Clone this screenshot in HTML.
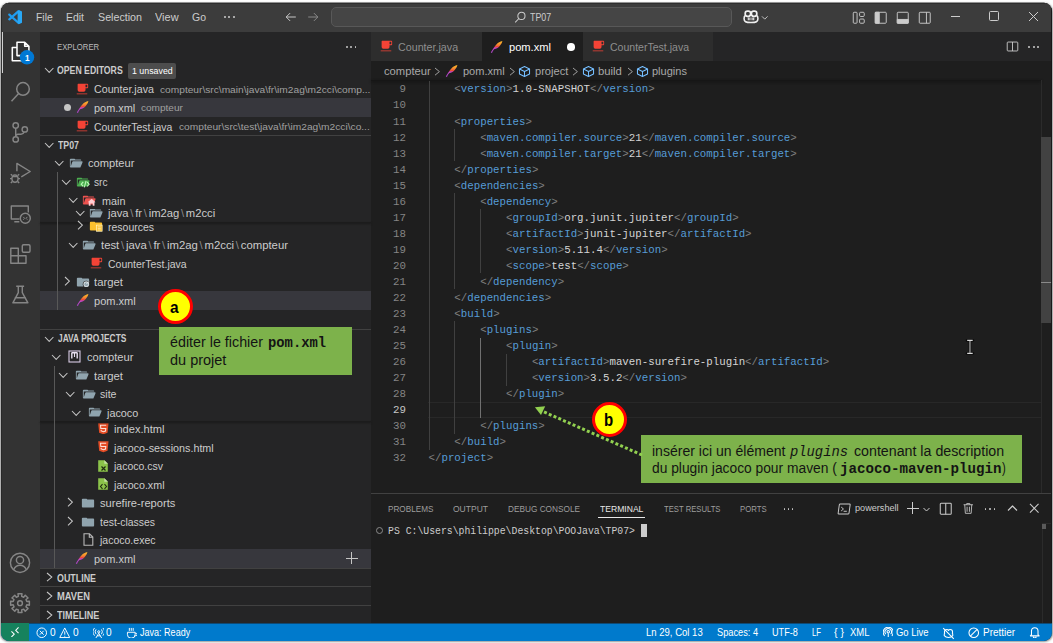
<!DOCTYPE html>
<html><head><meta charset="utf-8"><style>
html,body{margin:0;padding:0;}
body{width:1053px;height:643px;overflow:hidden;background:#ffffff;position:relative;}
#sh{position:absolute;left:1.2px;top:2.9px;width:1050.6px;height:637.0px;border-radius:8px;box-shadow:0 0.8px 2px 0.5px rgba(0,0,0,0.42);}
#w{position:absolute;left:0;top:0;width:1053px;height:643px;clip-path:inset(2.8px 1.1px 2.1px 1.1px round 8px);overflow:hidden;}
#w div,#w svg{position:absolute;}
.t{height:20px;line-height:20px;white-space:pre;}
</style></head><body><div id="sh"></div><div id="w">
<div style="left:0.00px;top:0.00px;width:1053.00px;height:643.00px;background:#1e1e1e;"></div>
<div style="left:0.00px;top:0.00px;width:1053.00px;height:32.00px;background:#3c3c3c;"></div>
<div style="left:0.00px;top:32.00px;width:40.00px;height:591.00px;background:#333333;"></div>
<div style="left:40.00px;top:32.00px;width:331.00px;height:591.00px;background:#252526;"></div>
<div style="left:371.00px;top:32.00px;width:682.00px;height:29.00px;background:#252526;"></div>
<div style="left:0.00px;top:623.00px;width:1053.00px;height:20.00px;background:#007acc;"></div>
<div style="left:0.00px;top:623.00px;width:1053.00px;height:1.00px;background:#0f4a75;"></div>
<div style="left:0.00px;top:623.00px;width:29.00px;height:20.00px;background:#16825d;"></div>
<div class="t" style="left:36.00px;top:7.39px;font-size:10.98px;color:#cccccc;font-weight:400;font-family:'Liberation Sans',sans-serif;transform:scaleX(0.9442);transform-origin:0 0;">File</div>
<div class="t" style="left:66.00px;top:7.39px;font-size:10.98px;color:#cccccc;font-weight:400;font-family:'Liberation Sans',sans-serif;transform:scaleX(0.9521);transform-origin:0 0;">Edit</div>
<div class="t" style="left:98.00px;top:7.39px;font-size:10.98px;color:#cccccc;font-weight:400;font-family:'Liberation Sans',sans-serif;transform:scaleX(0.9751);transform-origin:0 0;">Selection</div>
<div class="t" style="left:155.00px;top:7.39px;font-size:10.98px;color:#cccccc;font-weight:400;font-family:'Liberation Sans',sans-serif;transform:scaleX(1.0009);transform-origin:0 0;">View</div>
<div class="t" style="left:192.00px;top:7.39px;font-size:10.98px;color:#cccccc;font-weight:400;font-family:'Liberation Sans',sans-serif;transform:scaleX(0.9562);transform-origin:0 0;">Go</div>
<div style="left:331.20px;top:7.20px;width:401.30px;height:19.80px;background:#454545;border:1px solid #585858;box-sizing:border-box;border-radius:5px;"></div>
<div class="t" style="left:530.30px;top:7.39px;font-size:10.98px;color:#cccccc;font-weight:400;font-family:'Liberation Sans',sans-serif;transform:scaleX(0.8086);transform-origin:0 0;">TP07</div>
<div class="t" style="left:57.40px;top:36.50px;font-size:9.80px;color:#bbbbbb;font-weight:400;font-family:'Liberation Sans',sans-serif;transform:scaleX(0.7909);transform-origin:0 0;">EXPLORER</div>
<div class="t" style="left:57.00px;top:60.83px;font-size:10.00px;color:#cccccc;font-weight:700;font-family:'Liberation Sans',sans-serif;transform:scaleX(0.8715);transform-origin:0 0;">OPEN EDITORS</div>
<div style="left:128.00px;top:62.70px;width:48.00px;height:16.10px;background:#4d4d4d;border-radius:2px;"></div>
<div class="t" style="left:131.80px;top:61.08px;font-size:9.29px;color:#ffffff;font-weight:400;font-family:'Liberation Sans',sans-serif;transform:scaleX(0.9500);transform-origin:0 0;">1 unsaved</div>
<div style="left:40.00px;top:98.17px;width:331.00px;height:18.57px;background:#37373d;"></div>
<div class="t" style="left:94.40px;top:79.48px;font-size:10.98px;color:#cccccc;font-weight:400;font-family:'Liberation Sans',sans-serif;transform:scaleX(0.9725);transform-origin:0 0;">Counter.java</div>
<div class="t" style="left:159.50px;top:79.85px;font-size:9.90px;color:#a0a0a0;font-weight:400;font-family:'Liberation Sans',sans-serif;transform:scaleX(1.0306);transform-origin:0 0;">compteur\src\main\java\fr\im2ag\m2cci\comp...</div>
<div class="t" style="left:94.40px;top:98.05px;font-size:10.98px;color:#cccccc;font-weight:400;font-family:'Liberation Sans',sans-serif;transform:scaleX(0.9939);transform-origin:0 0;">pom.xml</div>
<div class="t" style="left:141.40px;top:98.42px;font-size:9.90px;color:#a0a0a0;font-weight:400;font-family:'Liberation Sans',sans-serif;transform:scaleX(1.0177);transform-origin:0 0;">compteur</div>
<div class="t" style="left:94.40px;top:116.62px;font-size:10.98px;color:#cccccc;font-weight:400;font-family:'Liberation Sans',sans-serif;transform:scaleX(0.9525);transform-origin:0 0;">CounterTest.java</div>
<div class="t" style="left:178.50px;top:116.99px;font-size:9.90px;color:#a0a0a0;font-weight:400;font-family:'Liberation Sans',sans-serif;transform:scaleX(1.0316);transform-origin:0 0;">compteur\src\test\java\fr\im2ag\m2cci\co...</div>
<div style="left:40.00px;top:134.60px;width:331.00px;height:1.00px;background:#414141;"></div>
<div style="left:40.00px;top:328.50px;width:331.00px;height:1.00px;background:#414141;"></div>
<div style="left:40.00px;top:568.00px;width:331.00px;height:1.00px;background:#414141;"></div>
<div style="left:40.00px;top:586.00px;width:331.00px;height:1.00px;background:#414141;"></div>
<div style="left:40.00px;top:605.00px;width:331.00px;height:1.00px;background:#414141;"></div>
<div class="t" style="left:58.00px;top:135.83px;font-size:10.00px;color:#cccccc;font-weight:700;font-family:'Liberation Sans',sans-serif;transform:scaleX(0.8784);transform-origin:0 0;">TP07</div>
<div class="t" style="left:57.50px;top:328.73px;font-size:10.00px;color:#cccccc;font-weight:700;font-family:'Liberation Sans',sans-serif;transform:scaleX(0.8393);transform-origin:0 0;">JAVA PROJECTS</div>
<div class="t" style="left:57.10px;top:568.83px;font-size:10.00px;color:#cccccc;font-weight:700;font-family:'Liberation Sans',sans-serif;transform:scaleX(0.8886);transform-origin:0 0;">OUTLINE</div>
<div class="t" style="left:57.10px;top:587.43px;font-size:10.00px;color:#cccccc;font-weight:700;font-family:'Liberation Sans',sans-serif;transform:scaleX(0.9329);transform-origin:0 0;">MAVEN</div>
<div class="t" style="left:57.10px;top:605.83px;font-size:10.00px;color:#cccccc;font-weight:700;font-family:'Liberation Sans',sans-serif;transform:scaleX(0.9085);transform-origin:0 0;">TIMELINE</div>
<svg style="left:43.60px;top:67.40px;" width="10" height="6" viewBox="0 0 10 6"><path d="M1 1 L5.20 5.40 L9.40 1" fill="none" stroke="#c5c5c5" stroke-width="1.05"/></svg>
<svg style="left:75.05px;top:81.57px;" width="14.03" height="14.03" viewBox="0 0 32 32"><path d="M4 26h24v2H4zM28 4H7a1 1 0 0 0-1 1v13a4 4 0 0 0 4 4h10a4 4 0 0 0 4-4v-4h4a2 2 0 0 0 2-2V6a2 2 0 0 0-2-2m0 8h-4V6h4Z" fill="#f44336"/></svg>
<svg style="left:76.00px;top:100.45px;" width="14" height="14" viewBox="-1 -7 14 14"><defs><linearGradient id="fg38" gradientUnits="userSpaceOnUse" x1="0" y1="-6" x2="0" y2="6"><stop offset="0" stop-color="#f9b92a"/><stop offset="0.25" stop-color="#f7962c"/><stop offset="0.42" stop-color="#f2603a"/><stop offset="0.5" stop-color="#e43b33"/><stop offset="0.56" stop-color="#c048c8"/><stop offset="1" stop-color="#a844c4"/></linearGradient></defs><path d="M-0.2 5.6 C0.8 3.6 1.6 2.4 2.5 1.2 C3.6 -0.4 4.6 -1.8 5.6 -2.8 C7.2 -4.4 9 -5.4 11.4 -5.9 C11.2 -4.6 10.6 -3.4 9.6 -2.3 C9 -1.5 8.4 -0.6 7.8 0 C7.2 0.7 6.6 1.1 6 1.3 C5.2 1.6 4.4 1.9 3.6 2.1 C2.8 2.6 2 3.6 1 5.9 Z" fill="url(#fg38)"/></svg>
<div style="left:63.6px;top:103.75px;width:7.4px;height:7.4px;border-radius:50%;background:#c5c5c5"></div>
<svg style="left:75.05px;top:118.71px;" width="14.03" height="14.03" viewBox="0 0 32 32"><path d="M4 26h24v2H4zM28 4H7a1 1 0 0 0-1 1v13a4 4 0 0 0 4 4h10a4 4 0 0 0 4-4v-4h4a2 2 0 0 0 2-2V6a2 2 0 0 0-2-2m0 8h-4V6h4Z" fill="#f44336"/></svg>
<div style="left:346.00px;top:45.70px;width:1.90px;height:1.90px;background:#c5c5c5;border-radius:50%;"></div>
<div style="left:350.20px;top:45.70px;width:1.90px;height:1.90px;background:#c5c5c5;border-radius:50%;"></div>
<div style="left:354.60px;top:45.70px;width:1.90px;height:1.90px;background:#c5c5c5;border-radius:50%;"></div>
<svg style="left:43.60px;top:142.40px;" width="10" height="6" viewBox="0 0 10 6"><path d="M1 1 L5.20 5.40 L9.40 1" fill="none" stroke="#c5c5c5" stroke-width="1.05"/></svg>
<div style="left:40.00px;top:290.90px;width:331.00px;height:19.00px;background:#37373d;"></div>
<div class="t" style="left:101.00px;top:235.18px;font-size:10.98px;color:#cccccc;font-weight:400;font-family:'Liberation Sans',sans-serif;transform:scaleX(1.0333);transform-origin:0 0;">test<span style="color:#8b8b8b;padding:0 1.7px">\</span>java<span style="color:#8b8b8b;padding:0 1.7px">\</span>fr<span style="color:#8b8b8b;padding:0 1.7px">\</span>im2ag<span style="color:#8b8b8b;padding:0 1.7px">\</span>m2cci<span style="color:#8b8b8b;padding:0 1.7px">\</span>compteur</div>
<svg style="left:68.10px;top:241.99px;" width="10" height="6" viewBox="0 0 10 6"><path d="M1 1 L5.20 5.40 L9.40 1" fill="none" stroke="#c5c5c5" stroke-width="1.05"/></svg>
<svg style="left:81.90px;top:237.84px;" width="14.00" height="14.00" viewBox="0 0 32 32"><path d="M28.967 12H9.442a2 2 0 0 0-1.898 1.368L4 24V10h24a2 2 0 0 0-2-2H15.124a2 2 0 0 1-1.28-.464l-1.288-1.072A2 2 0 0 0 11.276 6H4a2 2 0 0 0-2 2v16a2 2 0 0 0 2 2h22l4.805-11.212A2 2 0 0 0 28.967 12" fill="#90a4ae"/></svg>
<div class="t" style="left:107.90px;top:253.78px;font-size:10.98px;color:#cccccc;font-weight:400;font-family:'Liberation Sans',sans-serif;transform:scaleX(0.9549);transform-origin:0 0;">CounterTest.java</div>
<svg style="left:88.55px;top:255.87px;" width="14.03" height="14.03" viewBox="0 0 32 32"><path d="M4 26h24v2H4zM28 4H7a1 1 0 0 0-1 1v13a4 4 0 0 0 4 4h10a4 4 0 0 0 4-4v-4h4a2 2 0 0 0 2-2V6a2 2 0 0 0-2-2m0 8h-4V6h4Z" fill="#f44336"/></svg>
<div class="t" style="left:94.20px;top:272.28px;font-size:10.98px;color:#cccccc;font-weight:400;font-family:'Liberation Sans',sans-serif;transform:scaleX(1.0298);transform-origin:0 0;">target</div>
<svg style="left:63.60px;top:276.08px;" width="6" height="10" viewBox="0 0 6 10"><path d="M1 1 L5.40 5.20 L1 9.40" fill="none" stroke="#c5c5c5" stroke-width="1.05"/></svg>
<svg style="left:75.50px;top:274.94px;" width="14.00" height="14.00" viewBox="0 0 32 32"><path d="M13.844 7.536l-1.288-1.072A2 2 0 0 0 11.276 6H4a2 2 0 0 0-2 2v16a2 2 0 0 0 2 2h24a2 2 0 0 0 2-2V10a2 2 0 0 0-2-2H15.124a2 2 0 0 1-1.28-.464" fill="#90a4ae"/><circle cx="23.5" cy="21" r="8" fill="#252526"/><circle cx="23.5" cy="21" r="6.5" fill="#cfd8dc"/><circle cx="23.5" cy="21" r="4" fill="#90a4ae"/><path d="M23.5 21 L29 15" stroke="#eceff1" stroke-width="2"/></svg>
<div class="t" style="left:94.20px;top:290.88px;font-size:10.98px;color:#cccccc;font-weight:400;font-family:'Liberation Sans',sans-serif;transform:scaleX(1.0060);transform-origin:0 0;">pom.xml</div>
<svg style="left:76.00px;top:293.29px;" width="14" height="14" viewBox="-1 -7 14 14"><defs><linearGradient id="fg55" gradientUnits="userSpaceOnUse" x1="0" y1="-6" x2="0" y2="6"><stop offset="0" stop-color="#f9b92a"/><stop offset="0.25" stop-color="#f7962c"/><stop offset="0.42" stop-color="#f2603a"/><stop offset="0.5" stop-color="#e43b33"/><stop offset="0.56" stop-color="#c048c8"/><stop offset="1" stop-color="#a844c4"/></linearGradient></defs><path d="M-0.2 5.6 C0.8 3.6 1.6 2.4 2.5 1.2 C3.6 -0.4 4.6 -1.8 5.6 -2.8 C7.2 -4.4 9 -5.4 11.4 -5.9 C11.2 -4.6 10.6 -3.4 9.6 -2.3 C9 -1.5 8.4 -0.6 7.8 0 C7.2 0.7 6.6 1.1 6 1.3 C5.2 1.6 4.4 1.9 3.6 2.1 C2.8 2.6 2 3.6 1 5.9 Z" fill="url(#fg55)"/></svg>
<div style="left:40.00px;top:203.30px;width:331.00px;height:18.57px;background:#252526;"></div>
<div class="t" style="left:107.60px;top:203.18px;font-size:10.98px;color:#cccccc;font-weight:400;font-family:'Liberation Sans',sans-serif;transform:scaleX(1.0242);transform-origin:0 0;">java<span style="color:#8b8b8b;padding:0 1.7px">\</span>fr<span style="color:#8b8b8b;padding:0 1.7px">\</span>im2ag<span style="color:#8b8b8b;padding:0 1.7px">\</span>m2cci</div>
<svg style="left:75.30px;top:209.99px;" width="10" height="6" viewBox="0 0 10 6"><path d="M1 1 L5.20 5.40 L9.40 1" fill="none" stroke="#c5c5c5" stroke-width="1.05"/></svg>
<svg style="left:89.10px;top:205.84px;" width="14.00" height="14.00" viewBox="0 0 32 32"><path d="M28.967 12H9.442a2 2 0 0 0-1.898 1.368L4 24V10h24a2 2 0 0 0-2-2H15.124a2 2 0 0 1-1.28-.464l-1.288-1.072A2 2 0 0 0 11.276 6H4a2 2 0 0 0-2 2v16a2 2 0 0 0 2 2h22l4.805-11.212A2 2 0 0 0 28.967 12" fill="#90a4ae"/></svg>
<div style="left:40.00px;top:221.90px;width:331.00px;height:1.00px;background:#1c1c1c;box-shadow:0 1px 2px #151515;"></div>
<div class="t" style="left:107.80px;top:216.58px;font-size:10.98px;color:#cccccc;font-weight:400;font-family:'Liberation Sans',sans-serif;transform:scaleX(0.9549);transform-origin:0 0;">resources</div>
<svg style="left:77.00px;top:220.38px;" width="6" height="10" viewBox="0 0 6 10"><path d="M1 1 L5.40 5.20 L1 9.40" fill="none" stroke="#c5c5c5" stroke-width="1.05"/></svg>
<svg style="left:89.10px;top:219.23px;" width="14.00" height="14.00" viewBox="0 0 32 32"><path d="M13.844 7.536l-1.288-1.072A2 2 0 0 0 11.276 6H4a2 2 0 0 0-2 2v16a2 2 0 0 0 2 2h24a2 2 0 0 0 2-2V10a2 2 0 0 0-2-2H15.124a2 2 0 0 1-1.28-.464" fill="#fbc02d"/><rect x="17" y="14" width="13" height="14" fill="#fbc02d" stroke="#fff3c4" stroke-width="1.6"/><path d="M20 18h7M20 21.5h7M20 25h7" stroke="#fff3c4" stroke-width="1.6"/></svg>
<div style="left:40.00px;top:153.60px;width:331.00px;height:55.71px;background:#252526;"></div>
<div class="t" style="left:87.90px;top:153.48px;font-size:10.98px;color:#cccccc;font-weight:400;font-family:'Liberation Sans',sans-serif;transform:scaleX(1.0146);transform-origin:0 0;">compteur</div>
<svg style="left:54.40px;top:160.28px;" width="10" height="6" viewBox="0 0 10 6"><path d="M1 1 L5.20 5.40 L9.40 1" fill="none" stroke="#c5c5c5" stroke-width="1.05"/></svg>
<svg style="left:68.80px;top:156.13px;" width="14.00" height="14.00" viewBox="0 0 32 32"><path d="M28.967 12H9.442a2 2 0 0 0-1.898 1.368L4 24V10h24a2 2 0 0 0-2-2H15.124a2 2 0 0 1-1.28-.464l-1.288-1.072A2 2 0 0 0 11.276 6H4a2 2 0 0 0-2 2v16a2 2 0 0 0 2 2h22l4.805-11.212A2 2 0 0 0 28.967 12" fill="#90a4ae"/></svg>
<div class="t" style="left:94.20px;top:172.05px;font-size:10.98px;color:#cccccc;font-weight:400;font-family:'Liberation Sans',sans-serif;transform:scaleX(0.9299);transform-origin:0 0;">src</div>
<svg style="left:60.90px;top:178.85px;" width="10" height="6" viewBox="0 0 10 6"><path d="M1 1 L5.20 5.40 L9.40 1" fill="none" stroke="#c5c5c5" stroke-width="1.05"/></svg>
<svg style="left:75.50px;top:174.70px;" width="14.00" height="14.00" viewBox="0 0 32 32"><path d="M28.967 12H9.442a2 2 0 0 0-1.898 1.368L4 24V10h24a2 2 0 0 0-2-2H15.124a2 2 0 0 1-1.28-.464l-1.288-1.072A2 2 0 0 0 11.276 6H4a2 2 0 0 0-2 2v16a2 2 0 0 0 2 2h22l4.805-11.212A2 2 0 0 0 28.967 12" fill="#4caf50"/><path d="M16.5 16 l-4.5 5 4.5 5 M25.5 16 l4.5 5 -4.5 5 M23 13.5 l-4 15" fill="none" stroke="#b9f6b5" stroke-width="2.6"/></svg>
<div class="t" style="left:101.50px;top:190.62px;font-size:10.98px;color:#cccccc;font-weight:400;font-family:'Liberation Sans',sans-serif;transform:scaleX(0.9840);transform-origin:0 0;">main</div>
<svg style="left:68.00px;top:197.43px;" width="10" height="6" viewBox="0 0 10 6"><path d="M1 1 L5.20 5.40 L9.40 1" fill="none" stroke="#c5c5c5" stroke-width="1.05"/></svg>
<svg style="left:82.10px;top:193.28px;" width="14.00" height="14.00" viewBox="0 0 32 32"><path d="M28.967 12H9.442a2 2 0 0 0-1.898 1.368L4 24V10h24a2 2 0 0 0-2-2H15.124a2 2 0 0 1-1.28-.464l-1.288-1.072A2 2 0 0 0 11.276 6H4a2 2 0 0 0-2 2v16a2 2 0 0 0 2 2h22l4.805-11.212A2 2 0 0 0 28.967 12" fill="#ef5350"/><path d="M22 13 L31 21 H28.5 V29 H24.5 V24 H19.5 V29 H15.5 V21 H13 Z" fill="#ffcdd2"/></svg>
<div style="left:57.30px;top:172.20px;width:1.00px;height:137.70px;background:#585858;"></div>
<svg style="left:43.60px;top:335.60px;" width="10" height="6" viewBox="0 0 10 6"><path d="M1 1 L5.20 5.40 L9.40 1" fill="none" stroke="#c5c5c5" stroke-width="1.05"/></svg>
<div style="left:40.00px;top:549.10px;width:331.00px;height:18.90px;background:#37373d;"></div>
<div class="t" style="left:113.60px;top:418.99px;font-size:10.98px;color:#cccccc;font-weight:400;font-family:'Liberation Sans',sans-serif;transform:scaleX(1.0100);transform-origin:0 0;">index.html</div>
<svg style="left:96.80px;top:422.55px;" width="12.70" height="11.70" viewBox="0 0 13 12"><path d="M1.2 0.3h10.6l-1 9.7-4.3 1.6-4.3-1.6z" fill="#e44d26"/><path d="M9.4 2.3H3.6l0.3 3.3h5.1l-0.3 2.6-2.2 0.8-2.2-0.8-0.1-1.1" fill="none" stroke="#fde0d8" stroke-width="1.1"/></svg>
<div class="t" style="left:113.60px;top:437.56px;font-size:10.98px;color:#cccccc;font-weight:400;font-family:'Liberation Sans',sans-serif;transform:scaleX(0.9793);transform-origin:0 0;">jacoco-sessions.html</div>
<svg style="left:96.80px;top:441.12px;" width="12.70" height="11.70" viewBox="0 0 13 12"><path d="M1.2 0.3h10.6l-1 9.7-4.3 1.6-4.3-1.6z" fill="#e44d26"/><path d="M9.4 2.3H3.6l0.3 3.3h5.1l-0.3 2.6-2.2 0.8-2.2-0.8-0.1-1.1" fill="none" stroke="#fde0d8" stroke-width="1.1"/></svg>
<div class="t" style="left:113.60px;top:456.13px;font-size:10.98px;color:#cccccc;font-weight:400;font-family:'Liberation Sans',sans-serif;transform:scaleX(0.9547);transform-origin:0 0;">jacoco.csv</div>
<svg style="left:96.90px;top:459.54px;" width="12" height="12" viewBox="0 0 12 12"><path d="M1.2 0.2h6.3l3.3 3.3v8.3h-9.6z" fill="#8bc34a"/><path d="M7.3 0.2v3.5h3.5" fill="#c5e1a5"/><path d="M4.5 6.5l4 4M8.5 6.5l-4 4" stroke="#1e2a10" stroke-width="1.2"/></svg>
<div class="t" style="left:113.60px;top:474.70px;font-size:10.98px;color:#cccccc;font-weight:400;font-family:'Liberation Sans',sans-serif;transform:scaleX(0.9747);transform-origin:0 0;">jacoco.xml</div>
<svg style="left:96.90px;top:478.11px;" width="12" height="12" viewBox="0 0 12 12"><path d="M1.2 0.2h6.3l3.3 3.3v8.3h-9.6z" fill="#8bc34a"/><path d="M7.3 0.2v3.5h3.5" fill="#c5e1a5"/><path d="M5.5 6.2l-2 2.3 2 2.3M7.5 6.2l2 2.3-2 2.3" fill="none" stroke="#1e2a10" stroke-width="1.1"/></svg>
<div class="t" style="left:100.00px;top:493.27px;font-size:10.98px;color:#cccccc;font-weight:400;font-family:'Liberation Sans',sans-serif;transform:scaleX(1.0124);transform-origin:0 0;">surefire-reports</div>
<svg style="left:66.70px;top:497.08px;" width="6" height="10" viewBox="0 0 6 10"><path d="M1 1 L5.40 5.20 L1 9.40" fill="none" stroke="#c5c5c5" stroke-width="1.05"/></svg>
<svg style="left:81.30px;top:495.93px;" width="14.00" height="14.00" viewBox="0 0 32 32"><path d="M13.844 7.536l-1.288-1.072A2 2 0 0 0 11.276 6H4a2 2 0 0 0-2 2v16a2 2 0 0 0 2 2h24a2 2 0 0 0 2-2V10a2 2 0 0 0-2-2H15.124a2 2 0 0 1-1.28-.464" fill="#90a4ae"/></svg>
<div class="t" style="left:100.00px;top:511.84px;font-size:10.98px;color:#cccccc;font-weight:400;font-family:'Liberation Sans',sans-serif;transform:scaleX(0.9496);transform-origin:0 0;">test-classes</div>
<svg style="left:66.70px;top:515.64px;" width="6" height="10" viewBox="0 0 6 10"><path d="M1 1 L5.40 5.20 L1 9.40" fill="none" stroke="#c5c5c5" stroke-width="1.05"/></svg>
<svg style="left:81.30px;top:514.50px;" width="14.00" height="14.00" viewBox="0 0 32 32"><path d="M13.844 7.536l-1.288-1.072A2 2 0 0 0 11.276 6H4a2 2 0 0 0-2 2v16a2 2 0 0 0 2 2h24a2 2 0 0 0 2-2V10a2 2 0 0 0-2-2H15.124a2 2 0 0 1-1.28-.464" fill="#90a4ae"/></svg>
<div class="t" style="left:100.00px;top:530.41px;font-size:10.98px;color:#cccccc;font-weight:400;font-family:'Liberation Sans',sans-serif;transform:scaleX(0.9579);transform-origin:0 0;">jacoco.exec</div>
<svg style="left:83.40px;top:533.31px;" width="11" height="13" viewBox="0 0 11 13"><path d="M1 0.8h5.5l3.3 3.3v8.1h-8.8z M6.3 0.8v3.5h3.5" fill="none" stroke="#b8b8b8" stroke-width="1.1"/></svg>
<div class="t" style="left:94.00px;top:548.98px;font-size:10.98px;color:#cccccc;font-weight:400;font-family:'Liberation Sans',sans-serif;transform:scaleX(1.0011);transform-origin:0 0;">pom.xml</div>
<svg style="left:75.00px;top:551.38px;" width="14" height="14" viewBox="-1 -7 14 14"><defs><linearGradient id="fg94" gradientUnits="userSpaceOnUse" x1="0" y1="-6" x2="0" y2="6"><stop offset="0" stop-color="#f9b92a"/><stop offset="0.25" stop-color="#f7962c"/><stop offset="0.42" stop-color="#f2603a"/><stop offset="0.5" stop-color="#e43b33"/><stop offset="0.56" stop-color="#c048c8"/><stop offset="1" stop-color="#a844c4"/></linearGradient></defs><path d="M-0.2 5.6 C0.8 3.6 1.6 2.4 2.5 1.2 C3.6 -0.4 4.6 -1.8 5.6 -2.8 C7.2 -4.4 9 -5.4 11.4 -5.9 C11.2 -4.6 10.6 -3.4 9.6 -2.3 C9 -1.5 8.4 -0.6 7.8 0 C7.2 0.7 6.6 1.1 6 1.3 C5.2 1.6 4.4 1.9 3.6 2.1 C2.8 2.6 2 3.6 1 5.9 Z" fill="url(#fg94)"/></svg>
<div style="left:345.70px;top:557.50px;width:12.10px;height:1.10px;background:#c5c5c5;"></div>
<div style="left:351.10px;top:552.40px;width:1.10px;height:11.40px;background:#c5c5c5;"></div>
<div style="left:40.00px;top:347.20px;width:331.00px;height:74.28px;background:#252526;"></div>
<div class="t" style="left:87.10px;top:347.08px;font-size:10.98px;color:#cccccc;font-weight:400;font-family:'Liberation Sans',sans-serif;transform:scaleX(1.0167);transform-origin:0 0;">compteur</div>
<svg style="left:50.80px;top:353.89px;" width="10" height="6" viewBox="0 0 10 6"><path d="M1 1 L5.20 5.40 L9.40 1" fill="none" stroke="#c5c5c5" stroke-width="1.05"/></svg>
<svg style="left:68.40px;top:349.99px;" width="13" height="13" viewBox="0 0 13 13"><rect x="1" y="1" width="11" height="11" fill="none" stroke="#d9cde6" stroke-width="1.1"/><path d="M3.8 2.5v6M9.2 2.5v6M3.8 2.7h5.4" stroke="#e8e0f0" stroke-width="1.4" fill="none"/><path d="M6.5 3v4" stroke="#e8e0f0" stroke-width="1.1"/></svg>
<div class="t" style="left:93.60px;top:365.65px;font-size:10.98px;color:#cccccc;font-weight:400;font-family:'Liberation Sans',sans-serif;transform:scaleX(1.0334);transform-origin:0 0;">target</div>
<svg style="left:57.65px;top:372.46px;" width="10" height="6" viewBox="0 0 10 6"><path d="M1 1 L5.20 5.40 L9.40 1" fill="none" stroke="#c5c5c5" stroke-width="1.05"/></svg>
<svg style="left:74.80px;top:368.31px;" width="14.00" height="14.00" viewBox="0 0 32 32"><path d="M28.967 12H9.442a2 2 0 0 0-1.898 1.368L4 24V10h24a2 2 0 0 0-2-2H15.124a2 2 0 0 1-1.28-.464l-1.288-1.072A2 2 0 0 0 11.276 6H4a2 2 0 0 0-2 2v16a2 2 0 0 0 2 2h22l4.805-11.212A2 2 0 0 0 28.967 12" fill="#90a4ae"/></svg>
<div class="t" style="left:100.40px;top:384.22px;font-size:10.98px;color:#cccccc;font-weight:400;font-family:'Liberation Sans',sans-serif;transform:scaleX(0.9661);transform-origin:0 0;">site</div>
<svg style="left:64.50px;top:391.03px;" width="10" height="6" viewBox="0 0 10 6"><path d="M1 1 L5.20 5.40 L9.40 1" fill="none" stroke="#c5c5c5" stroke-width="1.05"/></svg>
<svg style="left:81.50px;top:386.88px;" width="14.00" height="14.00" viewBox="0 0 32 32"><path d="M28.967 12H9.442a2 2 0 0 0-1.898 1.368L4 24V10h24a2 2 0 0 0-2-2H15.124a2 2 0 0 1-1.28-.464l-1.288-1.072A2 2 0 0 0 11.276 6H4a2 2 0 0 0-2 2v16a2 2 0 0 0 2 2h22l4.805-11.212A2 2 0 0 0 28.967 12" fill="#90a4ae"/></svg>
<div class="t" style="left:106.90px;top:402.79px;font-size:10.98px;color:#cccccc;font-weight:400;font-family:'Liberation Sans',sans-serif;transform:scaleX(0.9868);transform-origin:0 0;">jacoco</div>
<svg style="left:71.35px;top:409.60px;" width="10" height="6" viewBox="0 0 10 6"><path d="M1 1 L5.20 5.40 L9.40 1" fill="none" stroke="#c5c5c5" stroke-width="1.05"/></svg>
<svg style="left:88.20px;top:405.44px;" width="14.00" height="14.00" viewBox="0 0 32 32"><path d="M28.967 12H9.442a2 2 0 0 0-1.898 1.368L4 24V10h24a2 2 0 0 0-2-2H15.124a2 2 0 0 1-1.28-.464l-1.288-1.072A2 2 0 0 0 11.276 6H4a2 2 0 0 0-2 2v16a2 2 0 0 0 2 2h22l4.805-11.212A2 2 0 0 0 28.967 12" fill="#90a4ae"/></svg>
<div style="left:40.00px;top:421.40px;width:331.00px;height:1.00px;background:#1c1c1c;box-shadow:0 1px 2px #151515;"></div>
<div style="left:54.20px;top:365.80px;width:1.00px;height:202.20px;background:#585858;"></div>
<svg style="left:45.60px;top:572.30px;" width="7" height="10" viewBox="0 0 7 10"><path d="M1 1 L5.80 5.10 L1 9.20" fill="none" stroke="#c5c5c5" stroke-width="1.05"/></svg>
<svg style="left:45.60px;top:590.90px;" width="7" height="10" viewBox="0 0 7 10"><path d="M1 1 L5.80 5.10 L1 9.20" fill="none" stroke="#c5c5c5" stroke-width="1.05"/></svg>
<svg style="left:45.60px;top:609.50px;" width="7" height="10" viewBox="0 0 7 10"><path d="M1 1 L5.80 5.10 L1 9.20" fill="none" stroke="#c5c5c5" stroke-width="1.05"/></svg>
<div style="left:371.00px;top:32.00px;width:111.30px;height:29.00px;background:#2d2d2d;"></div>
<div style="left:482.30px;top:32.00px;width:100.40px;height:29.00px;background:#1e1e1e;"></div>
<div style="left:582.70px;top:32.00px;width:130.50px;height:29.00px;background:#2d2d2d;"></div>
<div class="t" style="left:397.60px;top:36.79px;font-size:10.98px;color:#8f8f8f;font-weight:400;font-family:'Liberation Sans',sans-serif;transform:scaleX(0.9757);transform-origin:0 0;">Counter.java</div>
<div class="t" style="left:509.00px;top:36.79px;font-size:10.98px;color:#ffffff;font-weight:400;font-family:'Liberation Sans',sans-serif;transform:scaleX(1.0132);transform-origin:0 0;">pom.xml</div>
<div class="t" style="left:610.00px;top:36.79px;font-size:10.98px;color:#8f8f8f;font-weight:400;font-family:'Liberation Sans',sans-serif;transform:scaleX(0.9598);transform-origin:0 0;">CounterTest.java</div>
<div style="left:371.00px;top:61.00px;width:682.00px;height:19.00px;background:#1e1e1e;"></div>
<div class="t" style="left:384.00px;top:60.79px;font-size:10.98px;color:#a9a9a9;font-weight:400;font-family:'Liberation Sans',sans-serif;transform:scaleX(1.0233);transform-origin:0 0;">compteur</div>
<div class="t" style="left:463.00px;top:60.79px;font-size:10.98px;color:#a9a9a9;font-weight:400;font-family:'Liberation Sans',sans-serif;transform:scaleX(1.0035);transform-origin:0 0;">pom.xml</div>
<div class="t" style="left:534.50px;top:60.79px;font-size:10.98px;color:#a9a9a9;font-weight:400;font-family:'Liberation Sans',sans-serif;transform:scaleX(1.0110);transform-origin:0 0;">project</div>
<div class="t" style="left:597.70px;top:60.79px;font-size:10.98px;color:#a9a9a9;font-weight:400;font-family:'Liberation Sans',sans-serif;transform:scaleX(1.0307);transform-origin:0 0;">build</div>
<div class="t" style="left:651.90px;top:60.79px;font-size:10.98px;color:#a9a9a9;font-weight:400;font-family:'Liberation Sans',sans-serif;transform:scaleX(1.0039);transform-origin:0 0;">plugins</div>
<div style="left:371.00px;top:79.60px;width:670.00px;height:1.00px;background:#161616;box-shadow:0 1px 3px #0c0c0c;"></div>
<div style="left:428.00px;top:401.68px;width:613.00px;height:16.04px;background:transparent;border-top:1px solid #282828;border-bottom:1px solid #282828;box-sizing:border-box;"></div>
<div style="left:428.50px;top:80.88px;width:1.00px;height:368.92px;background:#404040;"></div>
<div style="left:454.38px;top:129.00px;width:1.00px;height:32.08px;background:#404040;"></div>
<div style="left:454.38px;top:193.16px;width:1.00px;height:96.24px;background:#404040;"></div>
<div style="left:454.38px;top:321.48px;width:1.00px;height:112.28px;background:#404040;"></div>
<div style="left:480.26px;top:209.20px;width:1.00px;height:64.16px;background:#404040;"></div>
<div style="left:480.26px;top:337.52px;width:1.00px;height:80.20px;background:#707070;"></div>
<div style="left:506.14px;top:353.56px;width:1.00px;height:32.08px;background:#404040;"></div>
<div class="t" style="left:399.43px;top:79.43px;font-size:10.78px;color:#858585;font-weight:400;font-family:'Liberation Mono',monospace;">9</div>
<div class="t" style="left:428.50px;top:79.43px;font-size:10.78px;color:#d4d4d4;font-weight:400;font-family:'Liberation Mono',monospace;">    <span style="color:#808080">&lt;</span><span style="color:#569cd6">version</span><span style="color:#808080">&gt;</span>1.0-SNAPSHOT<span style="color:#808080">&lt;/</span><span style="color:#569cd6">version</span><span style="color:#808080">&gt;</span></div>
<div class="t" style="left:392.96px;top:95.47px;font-size:10.78px;color:#858585;font-weight:400;font-family:'Liberation Mono',monospace;">10</div>
<div class="t" style="left:392.96px;top:111.51px;font-size:10.78px;color:#858585;font-weight:400;font-family:'Liberation Mono',monospace;">11</div>
<div class="t" style="left:428.50px;top:111.51px;font-size:10.78px;color:#d4d4d4;font-weight:400;font-family:'Liberation Mono',monospace;">    <span style="color:#808080">&lt;</span><span style="color:#569cd6">properties</span><span style="color:#808080">&gt;</span></div>
<div class="t" style="left:392.96px;top:127.55px;font-size:10.78px;color:#858585;font-weight:400;font-family:'Liberation Mono',monospace;">12</div>
<div class="t" style="left:428.50px;top:127.55px;font-size:10.78px;color:#d4d4d4;font-weight:400;font-family:'Liberation Mono',monospace;">        <span style="color:#808080">&lt;</span><span style="color:#569cd6">maven.compiler.source</span><span style="color:#808080">&gt;</span>21<span style="color:#808080">&lt;/</span><span style="color:#569cd6">maven.compiler.source</span><span style="color:#808080">&gt;</span></div>
<div class="t" style="left:392.96px;top:143.59px;font-size:10.78px;color:#858585;font-weight:400;font-family:'Liberation Mono',monospace;">13</div>
<div class="t" style="left:428.50px;top:143.59px;font-size:10.78px;color:#d4d4d4;font-weight:400;font-family:'Liberation Mono',monospace;">        <span style="color:#808080">&lt;</span><span style="color:#569cd6">maven.compiler.target</span><span style="color:#808080">&gt;</span>21<span style="color:#808080">&lt;/</span><span style="color:#569cd6">maven.compiler.target</span><span style="color:#808080">&gt;</span></div>
<div class="t" style="left:392.96px;top:159.63px;font-size:10.78px;color:#858585;font-weight:400;font-family:'Liberation Mono',monospace;">14</div>
<div class="t" style="left:428.50px;top:159.63px;font-size:10.78px;color:#d4d4d4;font-weight:400;font-family:'Liberation Mono',monospace;">    <span style="color:#808080">&lt;/</span><span style="color:#569cd6">properties</span><span style="color:#808080">&gt;</span></div>
<div class="t" style="left:392.96px;top:175.67px;font-size:10.78px;color:#858585;font-weight:400;font-family:'Liberation Mono',monospace;">15</div>
<div class="t" style="left:428.50px;top:175.67px;font-size:10.78px;color:#d4d4d4;font-weight:400;font-family:'Liberation Mono',monospace;">    <span style="color:#808080">&lt;</span><span style="color:#569cd6">dependencies</span><span style="color:#808080">&gt;</span></div>
<div class="t" style="left:392.96px;top:191.71px;font-size:10.78px;color:#858585;font-weight:400;font-family:'Liberation Mono',monospace;">16</div>
<div class="t" style="left:428.50px;top:191.71px;font-size:10.78px;color:#d4d4d4;font-weight:400;font-family:'Liberation Mono',monospace;">        <span style="color:#808080">&lt;</span><span style="color:#569cd6">dependency</span><span style="color:#808080">&gt;</span></div>
<div class="t" style="left:392.96px;top:207.75px;font-size:10.78px;color:#858585;font-weight:400;font-family:'Liberation Mono',monospace;">17</div>
<div class="t" style="left:428.50px;top:207.75px;font-size:10.78px;color:#d4d4d4;font-weight:400;font-family:'Liberation Mono',monospace;">            <span style="color:#808080">&lt;</span><span style="color:#569cd6">groupId</span><span style="color:#808080">&gt;</span>org.junit.jupiter<span style="color:#808080">&lt;/</span><span style="color:#569cd6">groupId</span><span style="color:#808080">&gt;</span></div>
<div class="t" style="left:392.96px;top:223.79px;font-size:10.78px;color:#858585;font-weight:400;font-family:'Liberation Mono',monospace;">18</div>
<div class="t" style="left:428.50px;top:223.79px;font-size:10.78px;color:#d4d4d4;font-weight:400;font-family:'Liberation Mono',monospace;">            <span style="color:#808080">&lt;</span><span style="color:#569cd6">artifactId</span><span style="color:#808080">&gt;</span>junit-jupiter<span style="color:#808080">&lt;/</span><span style="color:#569cd6">artifactId</span><span style="color:#808080">&gt;</span></div>
<div class="t" style="left:392.96px;top:239.83px;font-size:10.78px;color:#858585;font-weight:400;font-family:'Liberation Mono',monospace;">19</div>
<div class="t" style="left:428.50px;top:239.83px;font-size:10.78px;color:#d4d4d4;font-weight:400;font-family:'Liberation Mono',monospace;">            <span style="color:#808080">&lt;</span><span style="color:#569cd6">version</span><span style="color:#808080">&gt;</span>5.11.4<span style="color:#808080">&lt;/</span><span style="color:#569cd6">version</span><span style="color:#808080">&gt;</span></div>
<div class="t" style="left:392.96px;top:255.87px;font-size:10.78px;color:#858585;font-weight:400;font-family:'Liberation Mono',monospace;">20</div>
<div class="t" style="left:428.50px;top:255.87px;font-size:10.78px;color:#d4d4d4;font-weight:400;font-family:'Liberation Mono',monospace;">            <span style="color:#808080">&lt;</span><span style="color:#569cd6">scope</span><span style="color:#808080">&gt;</span>test<span style="color:#808080">&lt;/</span><span style="color:#569cd6">scope</span><span style="color:#808080">&gt;</span></div>
<div class="t" style="left:392.96px;top:271.91px;font-size:10.78px;color:#858585;font-weight:400;font-family:'Liberation Mono',monospace;">21</div>
<div class="t" style="left:428.50px;top:271.91px;font-size:10.78px;color:#d4d4d4;font-weight:400;font-family:'Liberation Mono',monospace;">        <span style="color:#808080">&lt;/</span><span style="color:#569cd6">dependency</span><span style="color:#808080">&gt;</span></div>
<div class="t" style="left:392.96px;top:287.95px;font-size:10.78px;color:#858585;font-weight:400;font-family:'Liberation Mono',monospace;">22</div>
<div class="t" style="left:428.50px;top:287.95px;font-size:10.78px;color:#d4d4d4;font-weight:400;font-family:'Liberation Mono',monospace;">    <span style="color:#808080">&lt;/</span><span style="color:#569cd6">dependencies</span><span style="color:#808080">&gt;</span></div>
<div class="t" style="left:392.96px;top:303.99px;font-size:10.78px;color:#858585;font-weight:400;font-family:'Liberation Mono',monospace;">23</div>
<div class="t" style="left:428.50px;top:303.99px;font-size:10.78px;color:#d4d4d4;font-weight:400;font-family:'Liberation Mono',monospace;">    <span style="color:#808080">&lt;</span><span style="color:#569cd6">build</span><span style="color:#808080">&gt;</span></div>
<div class="t" style="left:392.96px;top:320.03px;font-size:10.78px;color:#858585;font-weight:400;font-family:'Liberation Mono',monospace;">24</div>
<div class="t" style="left:428.50px;top:320.03px;font-size:10.78px;color:#d4d4d4;font-weight:400;font-family:'Liberation Mono',monospace;">        <span style="color:#808080">&lt;</span><span style="color:#569cd6">plugins</span><span style="color:#808080">&gt;</span></div>
<div class="t" style="left:392.96px;top:336.07px;font-size:10.78px;color:#858585;font-weight:400;font-family:'Liberation Mono',monospace;">25</div>
<div class="t" style="left:428.50px;top:336.07px;font-size:10.78px;color:#d4d4d4;font-weight:400;font-family:'Liberation Mono',monospace;">            <span style="color:#808080">&lt;</span><span style="color:#569cd6">plugin</span><span style="color:#808080">&gt;</span></div>
<div class="t" style="left:392.96px;top:352.11px;font-size:10.78px;color:#858585;font-weight:400;font-family:'Liberation Mono',monospace;">26</div>
<div class="t" style="left:428.50px;top:352.11px;font-size:10.78px;color:#d4d4d4;font-weight:400;font-family:'Liberation Mono',monospace;">                <span style="color:#808080">&lt;</span><span style="color:#569cd6">artifactId</span><span style="color:#808080">&gt;</span>maven-surefire-plugin<span style="color:#808080">&lt;/</span><span style="color:#569cd6">artifactId</span><span style="color:#808080">&gt;</span></div>
<div class="t" style="left:392.96px;top:368.15px;font-size:10.78px;color:#858585;font-weight:400;font-family:'Liberation Mono',monospace;">27</div>
<div class="t" style="left:428.50px;top:368.15px;font-size:10.78px;color:#d4d4d4;font-weight:400;font-family:'Liberation Mono',monospace;">                <span style="color:#808080">&lt;</span><span style="color:#569cd6">version</span><span style="color:#808080">&gt;</span>3.5.2<span style="color:#808080">&lt;/</span><span style="color:#569cd6">version</span><span style="color:#808080">&gt;</span></div>
<div class="t" style="left:392.96px;top:384.19px;font-size:10.78px;color:#858585;font-weight:400;font-family:'Liberation Mono',monospace;">28</div>
<div class="t" style="left:428.50px;top:384.19px;font-size:10.78px;color:#d4d4d4;font-weight:400;font-family:'Liberation Mono',monospace;">            <span style="color:#808080">&lt;/</span><span style="color:#569cd6">plugin</span><span style="color:#808080">&gt;</span></div>
<div class="t" style="left:392.96px;top:400.23px;font-size:10.78px;color:#c6c6c6;font-weight:400;font-family:'Liberation Mono',monospace;">29</div>
<div class="t" style="left:392.96px;top:416.27px;font-size:10.78px;color:#858585;font-weight:400;font-family:'Liberation Mono',monospace;">30</div>
<div class="t" style="left:428.50px;top:416.27px;font-size:10.78px;color:#d4d4d4;font-weight:400;font-family:'Liberation Mono',monospace;">        <span style="color:#808080">&lt;/</span><span style="color:#569cd6">plugins</span><span style="color:#808080">&gt;</span></div>
<div class="t" style="left:392.96px;top:432.31px;font-size:10.78px;color:#858585;font-weight:400;font-family:'Liberation Mono',monospace;">31</div>
<div class="t" style="left:428.50px;top:432.31px;font-size:10.78px;color:#d4d4d4;font-weight:400;font-family:'Liberation Mono',monospace;">    <span style="color:#808080">&lt;/</span><span style="color:#569cd6">build</span><span style="color:#808080">&gt;</span></div>
<div class="t" style="left:392.96px;top:448.35px;font-size:10.78px;color:#858585;font-weight:400;font-family:'Liberation Mono',monospace;">32</div>
<div class="t" style="left:428.50px;top:448.35px;font-size:10.78px;color:#d4d4d4;font-weight:400;font-family:'Liberation Mono',monospace;"><span style="color:#808080">&lt;/</span><span style="color:#569cd6">project</span><span style="color:#808080">&gt;</span></div>
<div style="left:1041.00px;top:80.00px;width:1.00px;height:413.00px;background:#2b2b2b;"></div>
<div style="left:1041.00px;top:137.20px;width:11.00px;height:186.00px;background:#424242;"></div>
<div style="left:1041.00px;top:282.00px;width:11.00px;height:1.20px;background:#8a8a8a;"></div>
<div style="left:371.00px;top:493.00px;width:682.00px;height:1.00px;background:#414141;"></div>
<div class="t" style="left:387.50px;top:498.64px;font-size:9.70px;color:#9d9d9d;font-weight:400;font-family:'Liberation Sans',sans-serif;transform:scaleX(0.8432);transform-origin:0 0;">PROBLEMS</div>
<div class="t" style="left:453.00px;top:498.64px;font-size:9.70px;color:#9d9d9d;font-weight:400;font-family:'Liberation Sans',sans-serif;transform:scaleX(0.8788);transform-origin:0 0;">OUTPUT</div>
<div class="t" style="left:507.50px;top:498.64px;font-size:9.70px;color:#9d9d9d;font-weight:400;font-family:'Liberation Sans',sans-serif;transform:scaleX(0.8519);transform-origin:0 0;">DEBUG CONSOLE</div>
<div class="t" style="left:600.30px;top:498.64px;font-size:9.70px;color:#e7e7e7;font-weight:400;font-family:'Liberation Sans',sans-serif;transform:scaleX(0.8860);transform-origin:0 0;">TERMINAL</div>
<div class="t" style="left:663.80px;top:498.64px;font-size:9.70px;color:#9d9d9d;font-weight:400;font-family:'Liberation Sans',sans-serif;transform:scaleX(0.7930);transform-origin:0 0;">TEST RESULTS</div>
<div class="t" style="left:740.40px;top:498.64px;font-size:9.70px;color:#9d9d9d;font-weight:400;font-family:'Liberation Sans',sans-serif;transform:scaleX(0.8011);transform-origin:0 0;">PORTS</div>
<div style="left:598.00px;top:516.60px;width:47.00px;height:1.20px;background:#e7e7e7;"></div>
<div class="t" style="left:855.00px;top:498.24px;font-size:9.70px;color:#cccccc;font-weight:400;font-family:'Liberation Sans',sans-serif;transform:scaleX(0.9414);transform-origin:0 0;">powershell</div>
<div class="t" style="left:387.90px;top:521.21px;font-size:11.60px;color:#cccccc;font-weight:400;font-family:'Liberation Mono',monospace;transform:scaleX(0.8453);transform-origin:0 0;">PS C:\Users\philippe\Desktop\POOJava\TP07&gt;</div>
<div style="left:641.20px;top:523.50px;width:5.60px;height:13.00px;background:#cccccc;"></div>
<div style="left:1041.50px;top:523.00px;width:1.00px;height:100.00px;background:#2b2b2b;"></div>
<div style="left:1042.00px;top:523.00px;width:10.00px;height:1.00px;background:#2b2b2b;"></div>
<div class="t" style="left:50.30px;top:622.78px;font-size:10.43px;color:#ffffff;font-weight:400;font-family:'Liberation Sans',sans-serif;transform:scaleX(0.9660);transform-origin:0 0;">0</div>
<div class="t" style="left:73.30px;top:622.78px;font-size:10.43px;color:#ffffff;font-weight:400;font-family:'Liberation Sans',sans-serif;transform:scaleX(0.9660);transform-origin:0 0;">0</div>
<div class="t" style="left:106.20px;top:622.78px;font-size:10.43px;color:#ffffff;font-weight:400;font-family:'Liberation Sans',sans-serif;transform:scaleX(0.9660);transform-origin:0 0;">0</div>
<div class="t" style="left:140.00px;top:622.78px;font-size:10.43px;color:#ffffff;font-weight:400;font-family:'Liberation Sans',sans-serif;transform:scaleX(0.8665);transform-origin:0 0;">Java: Ready</div>
<div class="t" style="left:646.40px;top:622.78px;font-size:10.43px;color:#ffffff;font-weight:400;font-family:'Liberation Sans',sans-serif;transform:scaleX(0.9145);transform-origin:0 0;">Ln 29, Col 13</div>
<div class="t" style="left:716.70px;top:622.78px;font-size:10.43px;color:#ffffff;font-weight:400;font-family:'Liberation Sans',sans-serif;transform:scaleX(0.8866);transform-origin:0 0;">Spaces: 4</div>
<div class="t" style="left:771.50px;top:622.78px;font-size:10.43px;color:#ffffff;font-weight:400;font-family:'Liberation Sans',sans-serif;transform:scaleX(0.8737);transform-origin:0 0;">UTF-8</div>
<div class="t" style="left:812.00px;top:622.78px;font-size:10.43px;color:#ffffff;font-weight:400;font-family:'Liberation Sans',sans-serif;transform:scaleX(0.7394);transform-origin:0 0;">LF</div>
<div class="t" style="left:849.90px;top:622.78px;font-size:10.43px;color:#ffffff;font-weight:400;font-family:'Liberation Sans',sans-serif;transform:scaleX(0.9096);transform-origin:0 0;">XML</div>
<div class="t" style="left:896.40px;top:622.78px;font-size:10.43px;color:#ffffff;font-weight:400;font-family:'Liberation Sans',sans-serif;transform:scaleX(0.9075);transform-origin:0 0;">Go Live</div>
<div class="t" style="left:982.60px;top:622.78px;font-size:10.43px;color:#ffffff;font-weight:400;font-family:'Liberation Sans',sans-serif;transform:scaleX(0.9555);transform-origin:0 0;">Prettier</div>
<div style="left:159.20px;top:327.20px;width:192.80px;height:47.80px;background:#7db24b;"></div>
<div class="t" style="left:170.30px;top:332.92px;font-size:13.80px;color:#141414;font-weight:400;font-family:'Liberation Sans',sans-serif;transform:scaleX(1.0364);transform-origin:0 0;">éditer le fichier</div>
<div class="t" style="left:267.90px;top:334.03px;font-size:13.80px;color:#141414;font-weight:700;font-family:'Liberation Mono',monospace;transform:scaleX(1.0023);transform-origin:0 0;">pom.xml</div>
<div class="t" style="left:170.30px;top:350.62px;font-size:13.80px;color:#141414;font-weight:400;font-family:'Liberation Sans',sans-serif;transform:scaleX(1.0502);transform-origin:0 0;">du projet</div>
<div style="left:641.00px;top:434.80px;width:381.20px;height:48.10px;background:#7db24b;"></div>
<div class="t" style="left:651.80px;top:442.02px;font-size:13.80px;color:#141414;font-weight:400;font-family:'Liberation Sans',sans-serif;transform:scaleX(1.0180);transform-origin:0 0;">insérer ici un élément</div>
<div class="t" style="left:790.00px;top:443.13px;font-size:13.80px;color:#141414;font-weight:400;font-family:'Liberation Mono',monospace;font-style:italic;transform:scaleX(1.0005);transform-origin:0 0;">plugins</div>
<div class="t" style="left:853.70px;top:442.02px;font-size:13.80px;color:#141414;font-weight:400;font-family:'Liberation Sans',sans-serif;transform:scaleX(1.0300);transform-origin:0 0;">contenant la description</div>
<div class="t" style="left:651.80px;top:458.82px;font-size:13.80px;color:#141414;font-weight:400;font-family:'Liberation Sans',sans-serif;transform:scaleX(0.9998);transform-origin:0 0;">du plugin jacoco pour maven (</div>
<div class="t" style="left:840.40px;top:459.93px;font-size:13.80px;color:#141414;font-weight:700;font-family:'Liberation Mono',monospace;transform:scaleX(1.0266);transform-origin:0 0;">jacoco-maven-plugin</div>
<div class="t" style="left:1001.90px;top:458.82px;font-size:13.80px;color:#141414;font-weight:400;font-family:'Liberation Sans',sans-serif;transform:scaleX(0.8244);transform-origin:0 0;">)</div>
<div style="left:158.2px;top:288.8px;width:34.8px;height:35px;border-radius:50%;background:#ffff00;border:3px solid #ff0000;box-sizing:border-box;"></div>
<div class="t" style="left:170.40px;top:297.28px;font-size:16.50px;color:#000000;font-weight:700;font-family:'Liberation Sans',sans-serif;transform:scaleX(0.9361);transform-origin:0 0;">a</div>
<div style="left:591.9px;top:402px;width:35px;height:35px;border-radius:50%;background:#ffff00;border:3px solid #ff0000;box-sizing:border-box;"></div>
<div class="t" style="left:604.40px;top:409.59px;font-size:18.50px;color:#000000;font-weight:700;font-family:'Liberation Sans',sans-serif;transform:scaleX(0.8133);transform-origin:0 0;">b</div>
<div style="left:1.00px;top:32.00px;width:1.80px;height:40.50px;background:#d0d0d0;"></div>
<svg style="left:0px;top:0px;" width="40" height="623" viewBox="0 0 40 623" fill="none" stroke-linejoin="round"><path d="M17 42.3H24.7L28.9 46.3V55.6H17Z M24.7 42.3V46.3H28.9" stroke="#ffffff" stroke-width="1.55"/><path d="M17 47.4H12.3V60.7H22" stroke="#ffffff" stroke-width="1.55"/><circle cx="27" cy="57.3" r="7.2" fill="#0078d4" stroke="#333333" stroke-width="0"/><circle cx="23" cy="88.9" r="6.3" stroke="#858585" stroke-width="1.5"/><path d="M18.4 93.8L11.5 101.3" stroke="#858585" stroke-width="1.5"/><g stroke="#858585" stroke-width="1.45"><circle cx="15.7" cy="125.4" r="2.7"/><circle cx="24.8" cy="129.4" r="2.7"/><circle cx="15.7" cy="139.4" r="2.7"/><path d="M15.7 128.1V136.7 M24.2 132 C23.6 133.6 22.8 134.3 21 134.3 H18 C16.6 134.3 15.9 135.2 15.7 136.5"/></g><g stroke="#858585" stroke-width="1.45"><path d="M16.9 171.3V163.4L30.2 171.5L21.3 176.8"/><ellipse cx="15" cy="178.6" rx="3.1" ry="3.7"/><path d="M12.2 176.6H17.8M11.9 178.6H10M18.1 178.6H20M12.3 175.5L10.8 174.2M17.7 175.5L19.2 174.2M12.3 181.6L10.8 183M17.7 181.6L19.2 183"/></g><g stroke="#858585" stroke-width="1.45"><path d="M19.5 219H11.3V205.9H28.3V212.6"/><path d="M14.3 221.8H19.3"/><circle cx="25.3" cy="218.3" r="5.0"/><path d="M23.2 216.9L24.6 218.3L23.2 219.7M27.4 216.9L26 218.3L27.4 219.7" stroke-width="1.0"/></g><g stroke="#858585" stroke-width="1.45"><path d="M10.8 248.3H18.3V263.3H10.8Z M10.8 255.8H26V263.3H18.3"/><rect x="22.3" y="244.8" width="7.7" height="7.5" rx="1.2"/></g><g stroke="#858585" stroke-width="1.45"><path d="M16.2 286.2H24.1M18.3 286.2V292.6L12.9 302.8H27.9L22.3 292.6V286.2M14.7 297.8H25.9"/></g><g stroke="#858585" stroke-width="1.45"><circle cx="20" cy="562.8" r="9.6"/><circle cx="20" cy="560" r="3.6"/><path d="M13.6 569.8C15 566.6 17.2 565.2 20 565.2S25 566.6 26.4 569.8"/></g><g stroke="#858585" stroke-width="1.45"><path d="M29.39 601.20 L29.39 605.20 L26.81 604.83 L25.97 606.86 L28.05 608.43 L25.23 611.25 L23.66 609.17 L21.63 610.01 L22.00 612.59 L18.00 612.59 L18.37 610.01 L16.34 609.17 L14.77 611.25 L11.95 608.43 L14.03 606.86 L13.19 604.83 L10.61 605.20 L10.61 601.20 L13.19 601.57 L14.03 599.54 L11.95 597.97 L14.77 595.15 L16.34 597.23 L18.37 596.39 L18.00 593.81 L22.00 593.81 L21.63 596.39 L23.66 597.23 L25.23 595.15 L28.05 597.97 L25.97 599.54 L26.81 601.57Z"/><circle cx="20" cy="603.2" r="2.4"/></g></svg>
<div class="t" style="left:24.50px;top:48.11px;font-size:9.20px;color:#ffffff;font-weight:700;font-family:'Liberation Sans',sans-serif;transform:scaleX(0.8976);transform-origin:0 0;">1</div>
<svg style="left:0px;top:0px;" width="30" height="30" viewBox="0 0 30 30"><path d="M9.3 19.3 L18.6 11.2 M9.3 14.6 L18.6 23.0" stroke="#1f9cf0" stroke-width="2.3" stroke-linecap="round"/><path d="M17.6 11.4 L19.4 10.3 L22 11.5 V22.8 L19.4 24 L17.6 23 Z" fill="#29a8f5"/></svg>
<svg style="left:284.00px;top:10.00px;" width="14.00" height="14.00" viewBox="0 0 16 16" fill="none" stroke="#cccccc" stroke-width="1.1" stroke-linejoin="round"><path d="M13.5 8H2.5M7 3.5L2.5 8 7 12.5"/></svg>
<svg style="left:306.00px;top:10.00px;" width="14.00" height="14.00" viewBox="0 0 16 16" fill="none" stroke="#8a8a8a" stroke-width="1.1" stroke-linejoin="round"><path d="M2.5 8H13.5M9 3.5L13.5 8 9 12.5"/></svg>
<svg style="left:514.00px;top:10.50px;" width="12.50" height="12.50" viewBox="0 0 16 16" fill="none" stroke="#cccccc" stroke-width="1.3" stroke-linejoin="round"><circle cx="9.5" cy="6.3" r="4.6"/><path d="M6.3 9.6L1.5 14.5"/></svg>
<svg style="left:738px;top:6px;" width="36" height="22" viewBox="738 6 36 22" fill="none" stroke="#f0f0f0"><rect x="745.2" y="11.2" width="5.4" height="5.2" rx="2.3" stroke-width="1.7"/><rect x="751.4" y="11.2" width="5.4" height="5.2" rx="2.3" stroke-width="1.7"/><path d="M745.3 15.8 C743.6 16.6 743.6 20.6 745.6 21.8 C747.3 22.8 754.7 22.8 756.4 21.8 C758.4 20.6 758.4 16.6 756.7 15.8" stroke-width="1.6"/><path d="M748.3 17.6V20.2 M749.9 17.6V20.2 M752.1 17.6V20.2 M753.7 17.6V20.2" stroke-width="1.1"/></svg>
<svg style="left:760.50px;top:13.50px;" width="7.50" height="7.50" viewBox="0 0 8 8" fill="none" stroke="#cccccc" stroke-width="1.0" stroke-linejoin="round"><path d="M1 2.5L4 5.5 7 2.5"/></svg>
<svg style="left:852.00px;top:11.00px;" width="13.50" height="13.50" viewBox="0 0 16 16" fill="none" stroke="#cccccc" stroke-width="1.1" stroke-linejoin="round"><rect x="1.5" y="1.5" width="4.5" height="13" rx="1"/><rect x="9" y="1.5" width="5.5" height="5" rx="1.2"/><rect x="9" y="9.5" width="5.5" height="5" rx="1.2"/></svg>
<svg style="left:873.50px;top:10.50px;" width="13.50" height="13.50" viewBox="0 0 16 16" fill="none" stroke="#cccccc" stroke-width="1.1" stroke-linejoin="round"><rect x="1.5" y="1.5" width="13" height="13" rx="1"/><path d="M6 1.5v13"/><rect x="1.5" y="1.5" width="4.5" height="13" fill="#cccccc"/></svg>
<svg style="left:895.50px;top:10.50px;" width="13.50" height="13.50" viewBox="0 0 16 16" fill="none" stroke="#cccccc" stroke-width="1.1" stroke-linejoin="round"><rect x="1.5" y="1.5" width="13" height="13" rx="1"/><rect x="1.5" y="10" width="13" height="4.5" fill="#cccccc"/></svg>
<svg style="left:917.50px;top:10.50px;" width="13.50" height="13.50" viewBox="0 0 16 16" fill="none" stroke="#cccccc" stroke-width="1.1" stroke-linejoin="round"><rect x="1.5" y="1.5" width="13" height="13" rx="1"/><path d="M10 1.5v13"/></svg>
<div style="left:950.80px;top:16.20px;width:9.40px;height:1.00px;background:#cccccc;"></div>
<div style="left:989.3px;top:11.2px;width:9.6px;height:9.6px;border:1px solid #cccccc;border-radius:1.5px;box-sizing:border-box;"></div>
<svg style="left:1027.50px;top:10.50px;" width="11.00" height="11.00" viewBox="0 0 11 11" fill="none" stroke="#cccccc" stroke-width="1.0" stroke-linejoin="round"><path d="M1 1L10 10M10 1L1 10"/></svg>
<div style="left:223.50px;top:16.30px;width:2.00px;height:2.00px;background:#cccccc;border-radius:50%;"></div>
<div style="left:228.20px;top:16.30px;width:2.00px;height:2.00px;background:#cccccc;border-radius:50%;"></div>
<div style="left:232.90px;top:16.30px;width:2.00px;height:2.00px;background:#cccccc;border-radius:50%;"></div>
<svg style="left:378.75px;top:39.28px;" width="14.03" height="14.03" viewBox="0 0 32 32"><path d="M4 26h24v2H4zM28 4H7a1 1 0 0 0-1 1v13a4 4 0 0 0 4 4h10a4 4 0 0 0 4-4v-4h4a2 2 0 0 0 2-2V6a2 2 0 0 0-2-2m0 8h-4V6h4Z" fill="#f44336"/></svg>
<svg style="left:490.30px;top:39.60px;" width="14" height="14" viewBox="-1 -7 14 14"><defs><linearGradient id="fg244" gradientUnits="userSpaceOnUse" x1="0" y1="-6" x2="0" y2="6"><stop offset="0" stop-color="#f9b92a"/><stop offset="0.25" stop-color="#f7962c"/><stop offset="0.42" stop-color="#f2603a"/><stop offset="0.5" stop-color="#e43b33"/><stop offset="0.56" stop-color="#c048c8"/><stop offset="1" stop-color="#a844c4"/></linearGradient></defs><path d="M-0.2 5.6 C0.8 3.6 1.6 2.4 2.5 1.2 C3.6 -0.4 4.6 -1.8 5.6 -2.8 C7.2 -4.4 9 -5.4 11.4 -5.9 C11.2 -4.6 10.6 -3.4 9.6 -2.3 C9 -1.5 8.4 -0.6 7.8 0 C7.2 0.7 6.6 1.1 6 1.3 C5.2 1.6 4.4 1.9 3.6 2.1 C2.8 2.6 2 3.6 1 5.9 Z" fill="url(#fg244)"/></svg>
<div style="left:567px;top:43px;width:7.6px;height:7.6px;border-radius:50%;background:#ffffff"></div>
<svg style="left:591.15px;top:39.28px;" width="14.03" height="14.03" viewBox="0 0 32 32"><path d="M4 26h24v2H4zM28 4H7a1 1 0 0 0-1 1v13a4 4 0 0 0 4 4h10a4 4 0 0 0 4-4v-4h4a2 2 0 0 0 2-2V6a2 2 0 0 0-2-2m0 8h-4V6h4Z" fill="#f44336"/></svg>
<svg style="left:1005.70px;top:40.00px;" width="13.00" height="13.00" viewBox="0 0 16 16" fill="none" stroke="#cccccc" stroke-width="1.1" stroke-linejoin="round"><rect x="1.5" y="2.5" width="13" height="11" rx="1"/><path d="M8 2.5v11"/></svg>
<div style="left:1028.30px;top:45.80px;width:2.00px;height:2.00px;background:#cccccc;border-radius:50%;"></div>
<div style="left:1032.70px;top:45.80px;width:2.00px;height:2.00px;background:#cccccc;border-radius:50%;"></div>
<div style="left:1037.10px;top:45.80px;width:2.00px;height:2.00px;background:#cccccc;border-radius:50%;"></div>
<svg style="left:444.80px;top:63.50px;" width="14" height="14" viewBox="-1 -7 14 14"><defs><linearGradient id="fg251" gradientUnits="userSpaceOnUse" x1="0" y1="-6" x2="0" y2="6"><stop offset="0" stop-color="#f9b92a"/><stop offset="0.25" stop-color="#f7962c"/><stop offset="0.42" stop-color="#f2603a"/><stop offset="0.5" stop-color="#e43b33"/><stop offset="0.56" stop-color="#c048c8"/><stop offset="1" stop-color="#a844c4"/></linearGradient></defs><path d="M-0.2 5.6 C0.8 3.6 1.6 2.4 2.5 1.2 C3.6 -0.4 4.6 -1.8 5.6 -2.8 C7.2 -4.4 9 -5.4 11.4 -5.9 C11.2 -4.6 10.6 -3.4 9.6 -2.3 C9 -1.5 8.4 -0.6 7.8 0 C7.2 0.7 6.6 1.1 6 1.3 C5.2 1.6 4.4 1.9 3.6 2.1 C2.8 2.6 2 3.6 1 5.9 Z" fill="url(#fg251)"/></svg>
<svg style="left:518.20px;top:64.50px;" width="13.00" height="13.00" viewBox="0 0 16 16" fill="none" stroke="#75beff" stroke-width="1.3" stroke-linejoin="round"><path d="M8 1.8L14.2 4.9V11.1L8 14.2 1.8 11.1V4.9Z"/><path d="M1.8 4.9L8 8 14.2 4.9M8 8V14.2"/></svg>
<svg style="left:581.50px;top:64.50px;" width="13.00" height="13.00" viewBox="0 0 16 16" fill="none" stroke="#75beff" stroke-width="1.3" stroke-linejoin="round"><path d="M8 1.8L14.2 4.9V11.1L8 14.2 1.8 11.1V4.9Z"/><path d="M1.8 4.9L8 8 14.2 4.9M8 8V14.2"/></svg>
<svg style="left:635.50px;top:64.50px;" width="13.00" height="13.00" viewBox="0 0 16 16" fill="none" stroke="#75beff" stroke-width="1.3" stroke-linejoin="round"><path d="M8 1.8L14.2 4.9V11.1L8 14.2 1.8 11.1V4.9Z"/><path d="M1.8 4.9L8 8 14.2 4.9M8 8V14.2"/></svg>
<svg style="left:434.30px;top:66.60px;" width="6" height="9" viewBox="0 0 6 9"><path d="M1 1 L5.40 4.60 L1 8.20" fill="none" stroke="#a0a0a0" stroke-width="1.0"/></svg>
<svg style="left:508.90px;top:66.60px;" width="6" height="9" viewBox="0 0 6 9"><path d="M1 1 L5.40 4.60 L1 8.20" fill="none" stroke="#a0a0a0" stroke-width="1.0"/></svg>
<svg style="left:572.30px;top:66.60px;" width="6" height="9" viewBox="0 0 6 9"><path d="M1 1 L5.40 4.60 L1 8.20" fill="none" stroke="#a0a0a0" stroke-width="1.0"/></svg>
<svg style="left:627.10px;top:66.60px;" width="6" height="9" viewBox="0 0 6 9"><path d="M1 1 L5.40 4.60 L1 8.20" fill="none" stroke="#a0a0a0" stroke-width="1.0"/></svg>
<div style="left:783.60px;top:507.80px;width:1.90px;height:1.90px;background:#cccccc;border-radius:50%;"></div>
<div style="left:787.60px;top:507.80px;width:1.90px;height:1.90px;background:#cccccc;border-radius:50%;"></div>
<div style="left:791.60px;top:507.80px;width:1.90px;height:1.90px;background:#cccccc;border-radius:50%;"></div>
<div style="left:376.2px;top:526.7px;width:7px;height:7px;border-radius:50%;border:1.3px solid #8a8a8a;box-sizing:border-box;"></div>
<svg style="left:836.50px;top:502.00px;" width="14.00" height="14.00" viewBox="0 0 16 16" fill="none" stroke="#cccccc" stroke-width="1.1" stroke-linejoin="round"><rect x="1.8" y="2.2" width="12.4" height="11.6" rx="1" transform="skewX(-8) translate(1.3 0)"/><path d="M4.8 5.8L7.4 8 4.8 10.2M7.6 10.6h3.6"/></svg>
<div style="left:906.50px;top:507.80px;width:12.60px;height:1.10px;background:#cccccc;"></div>
<div style="left:912.30px;top:501.80px;width:1.10px;height:12.60px;background:#cccccc;"></div>
<svg style="left:922.00px;top:505.00px;" width="9.00" height="9.00" viewBox="0 0 9 9" fill="none" stroke="#cccccc" stroke-width="1.0" stroke-linejoin="round"><path d="M1.5 3L4.5 6 7.5 3"/></svg>
<svg style="left:939.00px;top:501.50px;" width="13.50" height="13.50" viewBox="0 0 16 16" fill="none" stroke="#cccccc" stroke-width="1.2" stroke-linejoin="round"><rect x="1.5" y="1.5" width="13" height="13" rx="1"/><path d="M8 1.5v13"/></svg>
<svg style="left:962.00px;top:501.50px;" width="12.50" height="12.50" viewBox="0 0 16 16" fill="none" stroke="#cccccc" stroke-width="1.1" stroke-linejoin="round"><path d="M2 3.5h12M6 3.5V2h4v1.5M3.5 3.5l.8 11h7.4l.8-11M6.5 6v6.5M9.5 6v6.5"/></svg>
<div style="left:984.60px;top:507.80px;width:1.90px;height:1.90px;background:#cccccc;border-radius:50%;"></div>
<div style="left:989.10px;top:507.80px;width:1.90px;height:1.90px;background:#cccccc;border-radius:50%;"></div>
<div style="left:993.60px;top:507.80px;width:1.90px;height:1.90px;background:#cccccc;border-radius:50%;"></div>
<svg style="left:1006.50px;top:503.00px;" width="11.00" height="11.00" viewBox="0 0 11 11" fill="none" stroke="#cccccc" stroke-width="1.2" stroke-linejoin="round"><path d="M1 7.5L5.5 3 10 7.5"/></svg>
<svg style="left:1028.50px;top:503.00px;" width="10.50" height="10.50" viewBox="0 0 11 11" fill="none" stroke="#cccccc" stroke-width="1.1" stroke-linejoin="round"><path d="M1 1L10 10M10 1L1 10"/></svg>
<svg style="left:10.00px;top:627.00px;" width="9.50" height="9.50" viewBox="0 0 10 10" fill="none" stroke="#ffffff" stroke-width="1.1" stroke-linejoin="round"><path d="M1.5 5.5L4.5 8.5 1.5 11.5M9 1.5L6 4.5 9 7.5" transform="translate(0 -1)"/></svg>
<svg style="left:35.50px;top:627.00px;" width="11.50" height="11.50" viewBox="0 0 12 12" fill="none" stroke="#ffffff" stroke-width="1.0" stroke-linejoin="round"><circle cx="6" cy="6" r="5"/><path d="M4 4L8 8M8 4L4 8"/></svg>
<svg style="left:58.50px;top:626.80px;" width="11.50" height="11.50" viewBox="0 0 12 12" fill="none" stroke="#ffffff" stroke-width="1.0" stroke-linejoin="round"><path d="M6 1L11.2 11H0.8Z"/><path d="M6 4.5v3.5M6 9.2v.9"/></svg>
<svg style="left:92.50px;top:626.50px;" width="11.50" height="11.50" viewBox="0 0 12 12" fill="none" stroke="#ffffff" stroke-width="1.0" stroke-linejoin="round"><path d="M6 6.5L3 11.5M6 6.5L9 11.5M4.2 9.2h3.6"/><circle cx="6" cy="5" r="1.1"/><path d="M3.2 2.5a4 4 0 0 0 0 5M8.8 2.5a4 4 0 0 1 0 5M1.6 1a6.2 6.2 0 0 0 0 8M10.4 1a6.2 6.2 0 0 1 0 8"/></svg>
<svg style="left:125.50px;top:626.50px;" width="11.50" height="11.50" viewBox="0 0 12 12" fill="none" stroke="#ffffff" stroke-width="1.0" stroke-linejoin="round"><path d="M1.5 5.5h8v2.5a3.5 3.5 0 0 1-3.5 3.5h-1a3.5 3.5 0 0 1-3.5-3.5z M9.5 6.5h.8a1.3 1.3 0 0 1 0 2.6h-1.2"/><path d="M3.5 1v3M5.5 1v3M7.5 1v3"/></svg>
<div class="t" style="left:833.90px;top:622.78px;font-size:10.43px;color:#ffffff;font-weight:400;font-family:'Liberation Sans',sans-serif;transform:scaleX(1.0143);transform-origin:0 0;">{ }</div>
<svg style="left:882.50px;top:626.50px;" width="10.50" height="10.50" viewBox="0 0 11 11" fill="none" stroke="#ffffff" stroke-width="1.1" stroke-linejoin="round"><circle cx="5.5" cy="5" r="1.3"/><path d="M3 7.5a3.4 3.4 0 1 1 5 0M1.7 9.2a5.3 5.3 0 1 1 7.6 0M5.5 6.5V11"/></svg>
<svg style="left:942.00px;top:626.50px;" width="13.00" height="13.00" viewBox="0 0 16 16" fill="none" stroke="#ffffff" stroke-width="1.3" stroke-linejoin="round"><path d="M3 6.2c0-2 1.2-3.2 2.9-3.2 1 0 1.8.5 2.1 1.3.3-.8 1.1-1.3 2.1-1.3 1.7 0 2.9 1.2 2.9 3.2 0 .6-.1 1.1-.3 1.5l.5 1v2c-1 1.3-3 2.3-5.2 2.3s-4.2-1-5.2-2.3v-2l.5-1c-.2-.4-.3-.9-.3-1.5z"/><path d="M1.5 1.5L14.5 14.5"/></svg>
<svg style="left:968.00px;top:627.00px;" width="11.50" height="11.50" viewBox="0 0 12 12" fill="none" stroke="#ffffff" stroke-width="1.1" stroke-linejoin="round"><circle cx="6" cy="6" r="5"/><path d="M2.5 9.5L9.5 2.5"/></svg>
<svg style="left:1029.00px;top:626.30px;" width="11.50" height="11.50" viewBox="0 0 12 12" fill="none" stroke="#ffffff" stroke-width="1.1" stroke-linejoin="round"><path d="M2.6 9V5.3a3.4 3.4 0 0 1 6.8 0V9l1.2 1.3H1.4z M4.6 11.2a1.4 1.4 0 0 0 2.8 0"/></svg>
<svg style="left:520px;top:395px;" width="130" height="70" viewBox="520 395 130 70"><path d="M642 455 L543 411.5" stroke="#92d050" stroke-width="3" stroke-dasharray="3 2.2"/><path d="M534.9 407.3 L545.2 406.3 L541 415 Z" fill="#92d050"/></svg>
<div style="left:1042.00px;top:523.50px;width:3.50px;height:5.00px;background:#5a5a5a;"></div>
<div style="left:1.40px;top:8.00px;width:0.90px;height:615.00px;background:#272727;"></div>
<div style="left:8.00px;top:3.00px;width:1037.00px;height:0.90px;background:#2e2e2e;"></div>
<div style="left:1050.80px;top:8.00px;width:0.90px;height:615.00px;background:#151515;"></div>
<svg style="left:960px;top:334px;" width="20" height="26" viewBox="960 334 20 26"><path d="M966.9 340.4H973M966.9 353.4H973M969.95 340.6V353.2" stroke="#000000" stroke-width="2.6" stroke-linecap="round" opacity="0.55"/><path d="M967.2 340.4H972.7M967.2 353.4H972.7" stroke="#d8d8d8" stroke-width="1.2"/><path d="M969.95 340.9V352.9" stroke="#9a9a9a" stroke-width="1.3"/></svg>
</div></body></html>
